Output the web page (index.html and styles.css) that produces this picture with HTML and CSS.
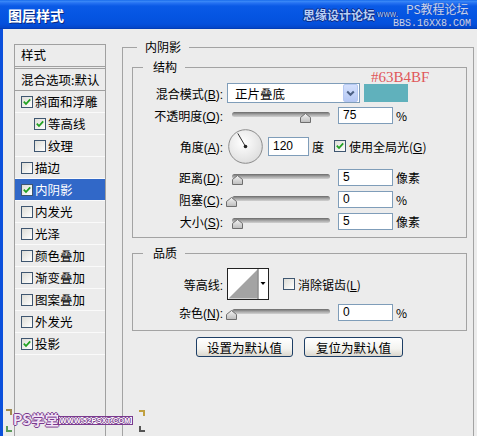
FILE: index.html
```html
<!DOCTYPE html>
<html>
<head>
<meta charset="utf-8">
<link rel="stylesheet" href="styles.css">
</head>
<body>
<div class="win">
  <div class="title">
    <span class="title-text">图层样式</span>
    <span class="wm wm1">思缘设计论坛</span>
    <span class="wm wm2">www.</span>
    <span class="wm wm3">PS教程论坛</span>
    <span class="wm wm4">BBS.16XX8.COM</span>
  </div>
  <div class="body">
    <div class="side">
      <div class="side-head">样式</div>
      <div class="side-blend">混合选项:默认</div>
      <div class="item"><span class="cb"><svg width="10" height="10" viewBox="0 0 10 10"><path d="M1.8 4.6 L4 7 L8.2 2.4" fill="none" stroke="#21a121" stroke-width="1.8"/></svg></span>斜面和浮雕</div>
      <div class="item sub"><span class="cb"><svg width="10" height="10" viewBox="0 0 10 10"><path d="M1.8 4.6 L4 7 L8.2 2.4" fill="none" stroke="#21a121" stroke-width="1.8"/></svg></span>等高线</div>
      <div class="item sub"><span class="cb"></span>纹理</div>
      <div class="item"><span class="cb"></span>描边</div>
      <div class="item sel"><span class="cb"><svg width="10" height="10" viewBox="0 0 10 10"><path d="M1.8 4.6 L4 7 L8.2 2.4" fill="none" stroke="#21a121" stroke-width="1.8"/></svg></span>内阴影</div>
      <div class="item"><span class="cb"></span>内发光</div>
      <div class="item"><span class="cb"></span>光泽</div>
      <div class="item"><span class="cb"></span>颜色叠加</div>
      <div class="item"><span class="cb"></span>渐变叠加</div>
      <div class="item"><span class="cb"></span>图案叠加</div>
      <div class="item"><span class="cb"></span>外发光</div>
      <div class="item"><span class="cb"><svg width="10" height="10" viewBox="0 0 10 10"><path d="M1.8 4.6 L4 7 L8.2 2.4" fill="none" stroke="#21a121" stroke-width="1.8"/></svg></span>投影</div>
    </div>
    <div class="main">
      <div class="group outer">
        <span class="legend">内阴影</span>
        <div class="group inner struct">
          <span class="legend">结构</span>
          <div class="row">
            <span class="lbl">混合模式(<u>B</u>):</span>
            <div class="select">
              <span class="sel-text">正片叠底</span>
              <span class="sel-btn"><svg width="13" height="16" viewBox="0 0 13 16"><path d="M3.2 6.5 L6.5 9.8 L9.8 6.5" fill="none" stroke="#4d6185" stroke-width="2"/></svg></span>
            </div>
            <span class="swatch"><span class="hex">#63B4BF</span></span>
          </div>
          <div class="row">
            <span class="lbl">不透明度(<u>O</u>):</span>
            <div class="slider"><span class="track"></span><span class="thumb" style="left:73px"><svg width="11" height="10" viewBox="0 0 11 10"><defs><linearGradient id="tg1" x1="0" y1="0" x2="0" y2="1"><stop offset="0" stop-color="#f4f4f4"/><stop offset="1" stop-color="#bcbcbc"/></linearGradient></defs><polygon points="5.5,0.5 10.5,4.5 10.5,9.5 0.5,9.5 0.5,4.5" fill="url(#tg1)" stroke="#6e6e6e"/></svg></span></div>
            <span class="num">75</span>
            <span class="unit">%</span>
          </div>
          <div class="row row-angle">
            <span class="lbl">角度(<u>A</u>):</span>
            <span class="dial"><svg width="35" height="35" viewBox="0 0 35 35"><defs><radialGradient id="dg" cx="0.42" cy="0.38" r="0.65"><stop offset="0" stop-color="#ffffff"/><stop offset="1" stop-color="#dedede"/></radialGradient></defs><circle cx="17.5" cy="17.5" r="16.8" fill="url(#dg)" stroke="#8c8c8c"/><line x1="17.5" y1="17.5" x2="9.8" y2="4.4" stroke="#333" stroke-width="1"/><circle cx="17.5" cy="17.5" r="1.8" fill="#222"/></svg></span>
            <span class="num num-angle">120</span>
            <span class="unit">度</span>
            <span class="cb cb-g"><svg width="10" height="10" viewBox="0 0 10 10"><path d="M1.8 4.6 L4 7 L8.2 2.4" fill="none" stroke="#21a121" stroke-width="1.8"/></svg></span>
            <span class="cb-text">使用全局光(<u>G</u>)</span>
          </div>
          <div class="row">
            <span class="lbl">距离(<u>D</u>):</span>
            <div class="slider"><span class="track"></span><span class="thumb" style="left:5px"><svg width="11" height="10" viewBox="0 0 11 10"><polygon points="5.5,0.5 10.5,4.5 10.5,9.5 0.5,9.5 0.5,4.5" fill="url(#tg1)" stroke="#6e6e6e"/></svg></span></div>
            <span class="num">5</span>
            <span class="unit">像素</span>
          </div>
          <div class="row">
            <span class="lbl">阻塞(<u>C</u>):</span>
            <div class="slider"><span class="track"></span><span class="thumb" style="left:-1px"><svg width="11" height="10" viewBox="0 0 11 10"><polygon points="5.5,0.5 10.5,4.5 10.5,9.5 0.5,9.5 0.5,4.5" fill="url(#tg1)" stroke="#6e6e6e"/></svg></span></div>
            <span class="num">0</span>
            <span class="unit">%</span>
          </div>
          <div class="row">
            <span class="lbl">大小(<u>S</u>):</span>
            <div class="slider"><span class="track"></span><span class="thumb" style="left:5px"><svg width="11" height="10" viewBox="0 0 11 10"><polygon points="5.5,0.5 10.5,4.5 10.5,9.5 0.5,9.5 0.5,4.5" fill="url(#tg1)" stroke="#6e6e6e"/></svg></span></div>
            <span class="num">5</span>
            <span class="unit">像素</span>
          </div>
        </div>
        <div class="group inner quality">
          <span class="legend">品质</span>
          <div class="row row-contour">
            <span class="lbl">等高线:</span>
            <span class="contour"><svg width="42" height="32" viewBox="0 0 42 32"><rect x="0.5" y="0.5" width="41" height="31" fill="#fff" stroke="#222"/><polygon points="1.5,30.5 30.5,1.5 30.5,30.5" fill="#a3a3a3"/><line x1="31" y1="1" x2="31" y2="31" stroke="#555"/><polygon points="33.5,14 38.5,14 36,17" fill="#000"/></svg></span>
            <span class="cb cb-l"></span>
            <span class="cb-text">消除锯齿(<u>L</u>)</span>
          </div>
          <div class="row">
            <span class="lbl">杂色(<u>N</u>):</span>
            <div class="slider"><span class="track"></span><span class="thumb" style="left:-1px"><svg width="11" height="10" viewBox="0 0 11 10"><polygon points="5.5,0.5 10.5,4.5 10.5,9.5 0.5,9.5 0.5,4.5" fill="url(#tg1)" stroke="#6e6e6e"/></svg></span></div>
            <span class="num">0</span>
            <span class="unit">%</span>
          </div>
        </div>
        <div class="btns">
          <span class="btn btn1">设置为默认值</span>
          <span class="btn btn2">复位为默认值</span>
        </div>
      </div>
    </div>
  </div>
  <span class="mark mark-tl"></span>
  <span class="mark mark-bl"></span>
  <span class="mark mark-tr"></span>
  <span class="mark mark-br"></span>
  <span class="wm-ps">PS学堂</span>
  <span class="wm-url">WWW.52PSXT.COM</span>
</div>
</body>
</html>
```

FILE: styles.css
```css
* { box-sizing: border-box; }
html, body { margin: 0; padding: 0; }
body {
  font-family: "Liberation Sans", "Noto Sans CJK SC", sans-serif;
  font-size: 12px;
  color: #000;
  background: #ececec;
}
.win {
  width: 477px;
  height: 436px;
  overflow: hidden;
  position: relative;
  background: #ececec;
}
.title {
  height: 29px;
  position: relative;
  display: flex;
  align-items: center;
  padding-left: 8px;
  background: linear-gradient(180deg, #0a5ee6 0px, #3d8cf8 1px, #2672f2 3px, #0a5ae6 6px, #0555e2 16px, #0450dc 24px, #0445c8 28px, #0036a8 29px);
}
.title-text {
  color: #fff;
  font-weight: bold;
  font-size: 14px;
  line-height: 16px;
  font-family: "Noto Sans CJK SC", sans-serif;
  text-shadow: 1px 1px 0 #0a2a80;
}
.wm {
  position: absolute;
  white-space: nowrap;
  font-family: "Noto Sans CJK SC", sans-serif;
}
.wm1 {
  left: 303px;
  top: 7px;
  font-size: 12px;
  line-height: 16px;
  font-weight: bold;
  color: #b8d0f6;
  text-shadow: 1px 0 0 #0c2a86, -1px 0 0 #0c2a86, 0 1px 0 #0c2a86, 0 -1px 0 #0c2a86;
}
.wm2 {
  left: 377px;
  top: 10px;
  font-size: 8px;
  line-height: 8px;
  color: #b8d0f6;
  text-shadow: 1px 0 0 #0c2a86, -1px 0 0 #0c2a86;
}
.wm3 {
  left: 406px;
  top: 1px;
  font-size: 12px;
  line-height: 15px;
  color: #c6d2ee;
  text-shadow: 0 0 1px #2a4aa0;
}
.wm4 {
  left: 393px;
  top: 18px;
  font-family: "Liberation Mono", monospace;
  font-size: 10px;
  line-height: 11px;
  color: #c8d2ec;
  text-shadow: 0 0 1px #2a4aa0;
}
.body {
  display: flex;
  align-items: flex-start;
  height: 407px;
  border-left: 3px solid #0b50dc;
  padding: 15px 0 0 11px;
}
.side {
  width: 92px;
  height: 400px;
  flex: none;
  border: 1px solid #a0a0a0;
  border-bottom: none;
  font-size: 12.5px;
  font-family: "Noto Sans CJK SC", sans-serif;
}
.side-head {
  height: 22px;
  padding-left: 6px;
  line-height: 19px;
  border-bottom: 1px solid #a0a0a0;
}
.side-blend {
  margin-top: 1px;
  height: 23px;
  border-top: 1px solid #a0a0a0;
  border-bottom: 1px solid #a0a0a0;
  padding-left: 6px;
  line-height: 21px;
}
.item {
  height: 22px;
  border-bottom: 1px solid #fafafa;
  display: flex;
  align-items: center;
  padding-left: 6px;
  white-space: nowrap;
}
.item.sub { padding-left: 19px; }
.item.sel { background: #3168c8; color: #fff; }
.cb {
  width: 12px;
  height: 12px;
  flex: none;
  border: 1px solid #3e5670;
  background: linear-gradient(135deg, #dcdcd6, #ffffff);
  margin-right: 2px;
  display: flex;
}
.main {
  margin-left: 16px;
  margin-top: 3px;
  width: 352px;
  flex: none;
}
.group {
  position: relative;
  border: 1px solid #a3a3a3;
}
.outer {
  height: 400px;
  border-bottom: none;
  padding: 19px 0 0 9px;
}
.inner { width: 335px; }
.struct { height: 171px; padding-top: 14px; }
.quality { margin-top: 15px; height: 78px; padding-top: 13px; }
.legend {
  position: absolute;
  top: -8px;
  line-height: 14px;
  background: #ececec;
  font-family: "Noto Sans CJK SC", sans-serif;
  font-size: 12px;
}
.outer > .legend { left: 14px; padding: 0 8px; }
.inner > .legend { left: 10px; padding: 0 8px 0 10px; }
.row {
  display: flex;
  align-items: center;
  height: 22px;
  white-space: nowrap;
}
.row-angle { height: 40px; }
.row-contour { height: 34px; }
.lbl {
  width: 90px;
  flex: none;
  text-align: right;
  margin-right: 4px;
}
u { text-decoration: underline; }
.select {
  width: 133px;
  height: 20px;
  flex: none;
  border: 1px solid #7f9db9;
  background: #fff;
  display: flex;
  align-items: center;
  justify-content: space-between;
}
.sel-text {
  padding-left: 7px;
  font-size: 12.5px;
  font-family: "Noto Sans CJK SC", sans-serif;
}
.sel-btn {
  width: 15px;
  height: 18px;
  margin-right: 1px;
  border: 1px solid #b6c8f2;
  border-radius: 2px;
  background: linear-gradient(180deg, #d4e0fc, #b6c9f4);
  display: flex;
  align-items: center;
  justify-content: center;
}
.swatch {
  position: relative;
  width: 44px;
  height: 18px;
  flex: none;
  margin-left: 4px;
  background: #60b1bc;
}
.hex {
  position: absolute;
  left: 7px;
  top: -14px;
  font-family: "Liberation Serif", serif;
  font-size: 15px;
  line-height: 15px;
  color: #e0575a;
}
.slider {
  position: relative;
  width: 103px;
  height: 20px;
  flex: none;
}
.track {
  position: absolute;
  left: 5px;
  right: 0;
  top: 7px;
  height: 5px;
  border-radius: 3px;
  background: linear-gradient(180deg, #6a6a6a, #a4a4a4 50%, #d2d2d2);
}
.thumb {
  position: absolute;
  top: 8px;
  width: 11px;
  height: 10px;
  display: flex;
}
.num {
  width: 55px;
  height: 17px;
  flex: none;
  margin-left: 8px;
  border: 1px solid #7f9db9;
  background: #fff;
  padding-left: 4px;
  line-height: 15px;
  font-size: 12px;
}
.num-angle {
  width: 41px;
  height: 19px;
  line-height: 17px;
  margin-left: 5px;
}
.unit {
  margin-left: 3px;
  font-family: "Noto Sans CJK SC", sans-serif;
}
.dial { display: flex; flex: none; margin-left: 1px; }
.cb-g { margin-left: 10px; margin-right: 3px; }
.cb-l { margin-left: 14px; margin-right: 3px; }
.cb-text { font-family: "Noto Sans CJK SC", sans-serif; }
.cb-text u { font-family: "Liberation Sans", sans-serif; }
.contour { display: flex; flex: none; }
.btns {
  display: flex;
  justify-content: center;
  gap: 11px;
  width: 335px;
  margin-top: 6px;
}
.btn {
  height: 20px;
  border: 1px solid #1e3f66;
  border-radius: 3px;
  background: linear-gradient(180deg, #ffffff, #f3f3ef 60%, #dbd7ce);
  font-size: 12.5px;
  font-family: "Noto Sans CJK SC", sans-serif;
  display: flex;
  align-items: center;
  justify-content: center;
}
.btn1 { width: 97px; }
.btn2 { width: 99px; }
.mark {
  position: absolute;
  width: 6px;
  height: 6px;
  border: 2px solid #b08a3a;
}
.mark-tl { left: 6px; top: 409px; border-left: none; border-bottom: none; border-color: #a08a50; }
.mark-bl { left: 6px; top: 426px; border-right: none; border-top: none; border-color: #5a9a5a; }
.mark-tr { left: 139px; top: 410px; border-left: none; border-bottom: none; border-color: #c0a040; }
.mark-br { left: 139px; top: 426px; border-right: none; border-top: none; border-color: #555; }
.wm-ps {
  position: absolute;
  left: 13px;
  top: 411px;
  font-family: "Noto Sans CJK SC", sans-serif;
  font-weight: bold;
  font-size: 14px;
  line-height: 16px;
  color: #f2e4f6;
  text-shadow: 1px 0 0 #7a3a8e, -1px 0 0 #7a3a8e, 0 1px 0 #7a3a8e, 0 -1px 0 #7a3a8e;
}
.wm-url {
  position: absolute;
  left: 58px;
  top: 416px;
  height: 9px;
  padding: 0 1px;
  border: 1px solid #7a3a8e;
  background: #f4eef6;
  font-family: "Liberation Sans", sans-serif;
  font-weight: bold;
  font-size: 7px;
  line-height: 7px;
  letter-spacing: 0.4px;
  color: #fff;
  text-shadow: 1px 0 0 #7a3a8e, -1px 0 0 #7a3a8e, 0 1px 0 #7a3a8e, 0 -1px 0 #7a3a8e;
}
```
